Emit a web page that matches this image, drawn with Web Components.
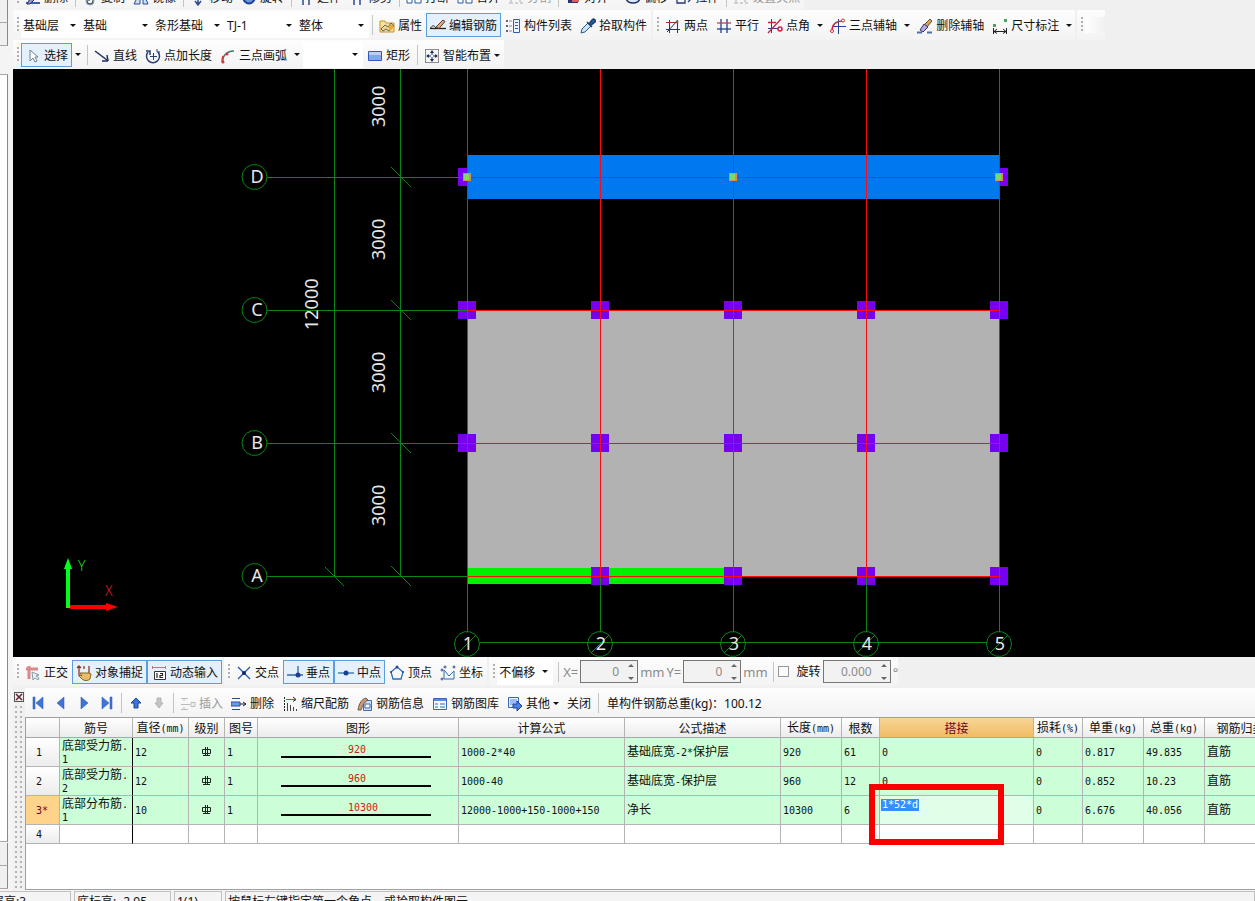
<!DOCTYPE html>
<html lang="zh-CN">
<head>
<meta charset="utf-8">
<title>钢筋编辑</title>
<style>
html,body{margin:0;height:100%;overflow:hidden}
body{font:12px/16px "Noto Sans","Noto Sans CJK SC",sans-serif;color:#111;background:#f0f0f0}
</style>
</head>
<body>
<rebar-app></rebar-app>
<script>
const define=(name,html,setup)=>{
  const t=document.createElement('template');
  t.innerHTML=html;
  customElements.define(name,class extends HTMLElement{
    constructor(){super();this.attachShadow({mode:'open'}).append(t.content.cloneNode(true));}
    connectedCallback(){if(setup&&!this.ready){this.ready=true;setup(this,this.shadowRoot);}}
  });
};

const ICONS={
 eraser:'<path d="M1 13h14" stroke="#3a5fb0" stroke-width="2"/><path d="M12 1l3 3-6 6-3-3z" fill="#e8b060" stroke="#556"/><path d="M6 7l3 3-4 4H2z" fill="#8a90d0" stroke="#335"/>',
 copy:'<path d="M5 2v9a3 3 0 0 0 6 0V5a2 2 0 0 0-4 0v6" fill="none" stroke="#456" stroke-width="1.4"/><circle cx="8" cy="11" r="4" fill="none" stroke="#89a"/>',
 mirror:'<path d="M7 2v12H1zM10 2v12h5z" fill="#cfe0f8" stroke="#2a4a90"/>',
 move:'<path d="M8 1v13M2 8h12M5 11l3 4 3-4" fill="none" stroke="#2a4a90" stroke-width="1.5"/>',
 rotate:'<circle cx="8" cy="8" r="5.5" fill="#6a94dc" stroke="#1c3f94" stroke-width="2"/>',
 extend:'<path d="M5 1v14M11 1v14M2 5h12" stroke="#2a4a90" fill="none" stroke-width="1.5"/>',
 brk:'<path d="M1 6h5v7H1zM9 6h6v7H9z" fill="#fff" stroke="#2a5a9a"/>',
 gray:'<path d="M1 13h4M7 13h3M12 13h3M3 3v9M12 3v9" stroke="#aaa" fill="none"/>',
 align:'<path d="M3 3h10v10H3z" fill="#24357c"/><path d="M7 8h7v4H7z" fill="#d86060"/>',
 offset:'<ellipse cx="8" cy="9" rx="6.500" ry="4" fill="#dfe8f8" stroke="#1c2f64" stroke-width="1.5"/>',
 stretch:'<path d="M1 5h8v8H1zM9 9h6M12 6l3 3-3 3" fill="none" stroke="#24357c" stroke-width="1.3"/>',
 prop:'<path d="M1 3h5l1 2h8v9H1z" fill="#f8e29a" stroke="#c8922c"/><path d="M2 11l4-4 3 2 3-4 3 3-3 3-2 2-3-2-3 2z" fill="#f0d890" stroke="#5c6470"/><path d="M9 9l4-3 2 3-4 4z" fill="#e8a830"/>',
 pen:'<path d="M0 10.500h16" stroke="#222" stroke-width="1.3"/><path d="M0 11c2-4 4-4 6-1" fill="none" stroke="#222"/><path d="M6 9l7-7 2 1.500-6 7z" fill="#e8a878" stroke="#5a3a30"/>',
 list:'<path d="M1 3h2M1 8h2M1 13h2" stroke="#334" stroke-width="1.500"/><path d="M4 3h3M4 8h3M4 13h3" stroke="#889"/><path d="M8.500 1.500h6v13h-6z" fill="#eef4ff" stroke="#2c5dc0"/><path d="M10 4.500h3M10 7.500h3M10 10.500h3" stroke="#2c5dc0"/>',
 picker:'<path d="M1 15l1-4 6-6 3 3-6 6z" fill="#c8e4f8" stroke="#2a5a8a"/><path d="M7 4l5 5M9 6l3-4c2-2 4 0 3 2l-4 3z" fill="#2a62a8" stroke="#1c3f74" stroke-width="1.5"/>',
 twopt:'<path d="M4.500 2v13M1 11.500h14M12.500 4v11" stroke="#223a78"/><path d="M1 4.500h10" stroke="#b03030"/><path d="M2 14L13 2" stroke="#333"/><circle cx="12" cy="4" r="1.500" fill="#7a6a30"/>',
 parallel:'<path d="M5 1v14M11 1v14" stroke="#24408a" stroke-width="1.3"/><path d="M1 5h14" stroke="#c04050" stroke-width="1.300"/><path d="M1 11h14" stroke="#24408a" stroke-width="1.3"/>',
 angle:'<path d="M4.500 1v14M1 10.500h10" stroke="#24408a"/><path d="M1 15L14 1M1 4.500h8" stroke="#c02838" stroke-width="1.3"/><circle cx="13" cy="11" r="2" fill="none" stroke="#d02030" stroke-width="1.5"/>',
 arc3:'<path d="M8.500 1v15M2 8.500h14" stroke="#24408a"/><path d="M2 13C2 6 6 3 13 3" fill="none" stroke="#d02838" stroke-width="1.5"/><circle cx="2" cy="13" r="1.500" fill="#fff" stroke="#d02838"/><circle cx="13" cy="2.500" r="1.500" fill="#fff" stroke="#d02838"/>',
 brush:'<path d="M0 14.500h5M10 14.500h5" stroke="#4a70b8" stroke-width="2"/><path d="M13 1l2 2-5 6-3-2z" fill="#e0a050" stroke="#554"/><path d="M7 6l4 3-5 5-3-2z" fill="#b8a8e0" stroke="#336"/>',
 dim:'<path d="M1.500 10v6M14.500 10v6M2 13.500h12M5 11l-3 2.500 3 2M11 11l3 2.500-3 2" stroke="#222" fill="none"/><path d="M1 6h3v3H1zM12 1h3v3h-3z" fill="#50a060"/>',
 cursor:'<path d="M5 2v11l3-3 2 4 2-1-2-4h3z" fill="#fff" stroke="#6a7f9c"/>',
 line:'<path d="M1 3l12 9" stroke="#1c2f64" stroke-width="1.5"/><path d="M14 13H8M14 13l-1-6" stroke="#1c2f64" stroke-width="1.500"/>',
 addlen:'<path d="M3 4a6.500 6.500 0 1 0 10 0" fill="none" stroke="#2a3f74" stroke-width="1.5"/><path d="M1 3h4v4" fill="none" stroke="#2a3f74" stroke-width="1.500"/><path d="M8.500 5v7M5 8.500h7M12 1v3h3" stroke="#2a3f74" fill="none"/>',
 arc:'<path d="M3 14C2 8 7 3 14 3" fill="none" stroke="#3a7a70" stroke-width="1.5"/><path d="M2 14c0-3 0-4 1-6" fill="none" stroke="#d03838" stroke-width="1.500"/><circle cx="3" cy="14" r="1.500" fill="#d03838"/><circle cx="7" cy="6" r="1.500" fill="#d03838"/>',
 rect:'<path d="M1.500 3.500h13v9h-13z" fill="#7fa8ee" stroke="#2d5cc0"/><path d="M2 4h12v3H2z" fill="#b8d0fa"/>',
 smart:'<rect x="1.500" y="1.500" width="13" height="13" fill="none" stroke="#222" stroke-dasharray="1 1"/><path d="M8 3v4M8 9v4M3 8h4M9 8h4" stroke="#1c2f64"/><path d="M8 2l2 3H6zM8 14l2-3H6zM2 8l3-2v4zM14 8l-3-2v4z" fill="#1c2f64"/>',
 ortho:'<path d="M1 4h12M4 1v13" stroke="#d88888" stroke-width="3"/><path d="M7 7l1 8 2-2 3 2 1-2-3-2 3-1z" fill="#eef2f8" stroke="#8898aa"/>',
 snap:'<path d="M3 1v10M1 3l2-2 2 2M13 1v8M8 4V1" stroke="#8a3a28" fill="none" stroke-width="1.3"/><path d="M4 8h9l2 1-1 5c-2 2-6 2-8 0l-3-3 1-1 2 1z" fill="#e8bc68" stroke="#8a6424"/>',
 dyn:'<path d="M1 2.500h14M1.500 1v3M14.500 1v3" stroke="#c07878"/><path d="M3.500 6.500h11v8h-11z" fill="#fff" stroke="#333"/><path d="M6 8v5M9 8.500h2.500v2H9v2h3" stroke="#222" fill="none" stroke-width="1.200"/>',
 cross:'<path d="M2 2l12 12M14 2L2 14" stroke="#2a5cae" stroke-width="1.400"/><circle cx="8" cy="8" r="2" fill="#102a60"/>',
 perp:'<path d="M0 10h16M11 1v9" stroke="#2a6cae" stroke-width="1.3"/><circle cx="11" cy="10" r="2.500" fill="#1c3f94"/>',
 mid:'<path d="M0 8h16" stroke="#3a86b8" stroke-width="1.5"/><circle cx="8" cy="8" r="2.500" fill="#1c3f94"/>',
 penta:'<path d="M8 2l6 5-2 7H4L2 7z" fill="none" stroke="#2a6cbe" stroke-width="1.300"/><circle cx="8" cy="2" r="1.500" fill="#2a4a90"/><circle cx="14" cy="7" r="1" fill="#2a4a90"/><circle cx="2" cy="7" r="1" fill="#2a4a90"/>',
 coord:'<path d="M4 5v9h10V6l-5 5z" fill="none" stroke="#2a6cae"/><g fill="#fff" stroke="#2a4a90"><circle cx="2" cy="5" r="1"/><circle cx="2" cy="14" r="1"/><circle cx="5" cy="2" r="1"/><circle cx="14" cy="2" r="1"/></g>',
 first:'<path d="M3 2h2v12H3zM13 2v12L6 8z" fill="#3f74d8" stroke="#2450b0" stroke-width=".500"/>',
 prev:'<path d="M11 2v12L4 8z" fill="#3f74d8" stroke="#2450b0" stroke-width=".500"/>',
 next:'<path d="M5 2v12l7-6z" fill="#3f74d8" stroke="#2450b0" stroke-width=".500"/>',
 last:'<path d="M11 2h2v12h-2zM3 2v12l7-6z" fill="#3f74d8" stroke="#2450b0" stroke-width=".500"/>',
 up:'<path d="M8 3l5 5h-3v5H6V8H3z" fill="#3f74d8" stroke="#1c409a"/>',
 down:'<path d="M8 13l4-5H10V3H6v5H4z" fill="#c4c4c4" stroke="#b4b4b4"/>',
 insert:'<path d="M1 2.500h7M1 13.500h7M1 8.500h9M4 2v3M4 11v2" stroke="#bbb"/><path d="M11 6.500h4v4h-4z" fill="#eee" stroke="#bbb"/>',
 remove:'<path d="M1 2.500h8M1 13.500h8" stroke="#2a4a90"/><path d="M0 6h9v4H0z" fill="#6a9ae8" stroke="#24509a"/><path d="M9 8h6M12 6l3 2-3 2" fill="none" stroke="#222"/>',
 scale:'<path d="M2.500 1v14" stroke="#222" stroke-dasharray="2 1"/><path d="M4 3.500h9" stroke="#c04040"/><path d="M11 1l3 2.500-3 2" stroke="#222"/><path d="M5.500 7v8M8.500 9v6M11.500 11v4M14.500 13v2" stroke="#444"/>',
 info:'<path d="M6.500 4.500h8v10h-8z" fill="#cfe0fa" stroke="#3a6ab8"/><path d="M8 8h5v4H8z" fill="#fff" stroke="#3a6ab8"/><path d="M1 14c1-7 4-11 8-12l2 2c-4 2-5 5-7 10z" fill="#c89a7a" stroke="#6a5848"/>',
 lib:'<path d="M1.500 2.500h13v11h-13z" fill="#f4f8ff" stroke="#3a66b4"/><path d="M2 4h12" stroke="#5a8ade" stroke-width="2"/><path d="M3 8h3M8 8h5M3 11h3M8 11h5" stroke="#3a66b4"/>',
 other:'<path d="M1.500 1.500h10v10h-10z" fill="#e4eeff" stroke="#3a66b4"/><path d="M3 4h7M3 6h7M3 8h4" stroke="#5a8ade"/><path d="M6 8h4V5l5 5-5 5v-3H6z" fill="#4a80e0" stroke="#1c409a"/>'
};

define('ui-icon','<style>:host{display:block;width:16px;height:16px;flex:none}svg{display:block}</style><svg width="16" height="16" viewBox="0 0 16 16" fill="none" aria-hidden="true"></svg>',
 (el,r)=>{r.querySelector('svg').innerHTML=ICONS[el.getAttribute('name')]||'';});

define('tool-button',`<style>
:host{display:flex;flex:none;align-items:center}
button{font:inherit;color:inherit;display:flex;align-items:center;gap:3px;height:24px;margin:0;padding:2px 3px 0;border:1px solid transparent;background:none;white-space:nowrap}
:host([active]) button{border-color:#5a9de0;background:#e4f0fb}
:host([disabled]) button{color:#9a9a9a}
:host([bare]) button{padding:0;width:23px;justify-content:center}
:host button.split{width:12px;padding:0;justify-content:center;border:0;background:none}
svg{display:block}
</style><button type="button" class="main"></button>`,
 (el,r)=>{
  const b=r.querySelector('.main'),arrow='<svg width="6" height="3" viewBox="0 0 6 3" aria-hidden="true"><path d="M0 0h6L3 3z" fill="#111"/></svg>';
  const ic=el.getAttribute('icon');
  b.innerHTML=(ic?`<ui-icon name="${ic}"></ui-icon>`:'')+(el.hasAttribute('bare')?'':'<slot></slot>')+(el.hasAttribute('menu')?arrow:'');
  if(el.hasAttribute('label'))b.setAttribute('aria-label',el.getAttribute('label'));
  if(el.hasAttribute('active'))b.setAttribute('aria-pressed','true');
  if(el.hasAttribute('disabled'))b.disabled=true;
  if(el.hasAttribute('split')){
   const s=document.createElement('button');s.type='button';s.className='split';s.setAttribute('aria-label','更多');s.innerHTML=arrow;r.append(s);
  }
 });

define('tool-select',`<style>
:host{display:grid;flex:none;width:72px;align-items:center}
:host([size="s"]){width:60px}
select,svg{grid-area:1/1}
select{appearance:none;box-sizing:border-box;font:inherit;color:inherit;width:100%;height:26px;border:0;border-radius:0;margin:0;padding:2px 0 0 2px;background:#fff}
svg{justify-self:end;margin-right:5px;pointer-events:none}
</style><select></select><svg width="6" height="3" viewBox="0 0 6 3" aria-hidden="true"><path d="M0 0h6L3 3z" fill="#111"/></svg>`,
 (el,r)=>{const s=r.querySelector('select');s.setAttribute('aria-label',el.getAttribute('label'));s.append(new Option(el.getAttribute('value')||''));});

define('tool-sep','<style>:host{display:block;flex:none;width:6px;height:20px;background:linear-gradient(#c4c4c4,#c4c4c4) 3px 0/1px 100% no-repeat}</style>');

define('tool-group',`<style>
:host{display:flex;flex:none;align-items:center;height:100%;background:linear-gradient(#fdfdfd,#f3f3f3)}
.grip{flex:none;width:8px;height:16px;background:radial-gradient(circle at 1px 1px,#b0b0b0 1px,transparent 1px) 4px 0/4px 4px repeat-y}
</style><span class="grip"></span><slot></slot>`);

define('tool-row',`<style>:host{display:flex;flex:none;align-items:center;gap:2px;height:30px;background:#f0f0f0;overflow:hidden}</style><slot></slot>`);

define('spin-field',`<style>
:host{display:grid;flex:none;width:58px;align-items:center}
:host([wide]){width:68px}
input,svg{grid-area:1/1}
input{box-sizing:border-box;width:100%;height:23px;font:inherit;font-size:12px;color:#8a8a8a;text-align:right;margin:0;padding:0 18px 0 2px;border:1px solid #767676;border-radius:0;background:#f2f2f2}
svg{justify-self:end;margin-right:4px}
</style><input type="text"><svg width="6" height="18" viewBox="0 0 6 18" aria-hidden="true"><path d="M0 4h6L3 1zM0 14h6l-3 3z" fill="#666"/></svg>`,
 (el,r)=>{const i=r.querySelector('input');i.value=el.getAttribute('value');i.setAttribute('aria-label',el.getAttribute('label'));});

define('offset-fields',`<style>
:host{display:flex;align-items:center;gap:2px;color:#8a8a8a;font-size:13px}
tool-select{width:56px;color:#111;font-size:12px}
label{display:flex;align-items:center;gap:8px;color:#111;font-size:12px}
input{appearance:none;width:11px;height:11px;box-sizing:border-box;margin:0;border:1px solid #999;background:#fafafa}
</style>
<tool-select label="偏移方式" value="不偏移"></tool-select><tool-sep></tool-sep>
<span>X=</span><spin-field label="X" value="0"></spin-field><span>mm</span>
<span>Y=</span><spin-field label="Y" value="0"></spin-field><span>mm</span>
<tool-sep></tool-sep><label><input type="checkbox">旋转</label>
<spin-field wide label="旋转角度" value="0.000"></spin-field><span>°</span>`);

define('side-strip',`<style>
:host{display:flex;flex-direction:column;width:13px;background:#f4f4f4}
div{width:7px;border-right:1px solid #8a8a8a;border-bottom:1px solid #a8a8a8;background:#f0f0f0}
.tab{height:22px}.fill{flex:1;background:#fff;margin-top:28px;border-top:1px solid #a8a8a8}.end{margin-bottom:1px}
.gap{height:1px;border:0;background:none}
</style><div class="tab"></div><div class="tab"></div><div class="fill"></div><div class="gap"></div><div class="tab"></div><div class="tab end"></div>`);

define('cad-view',`<style>
:host{display:block;min-height:0;background:#000;overflow:hidden}
svg{display:block;width:100%;height:100%}
text{font:18px "Noto Sans","Noto Sans CJK SC",sans-serif;fill:#e6e6e6}
.n{text-anchor:middle}
.ax{font:300 14px "Open Sans","Noto Sans",sans-serif}
</style><svg role="img" aria-label="基础层平面图"><g id="g" transform="translate(-13 -69)" fill="none"></g></svg>`,
 (el,r)=>{
  const X=[467,600,733,866,999],Y=[177,310,443,576],names=['D','C','B','A'];
  const G='stroke="#0c8418"',R='stroke="#ff0a10"';
  const circle=(x,y)=>{let p=[];for(let i=0;i<14;i++){const a=i*Math.PI/7;p.push((x+12.5*Math.cos(a)).toFixed(1)+','+(y+12.5*Math.sin(a)).toFixed(1));}return `<polygon points="${p.join(' ')}" ${G}/>`;};
  let s='<path d="M468 311h531v265H468z" fill="#b2b2b2"/><path d="M458 168h18v18h-18zM990 168h18v18h-18z" fill="#7800f0"/><path d="M467 155h532v44H467z" fill="#0078f0"/><path d="M467 568h258v16H467z" fill="#00f000"/>';
  for(const y of Y.slice(1))for(const x of X)if(!(y===576&&x===467))s+=`<path d="M${x-9} ${y-9}h18v18h-18z" fill="#7800f0"/>`;
  s+=`<path d="M334.5 69V577M400.5 69V577M480 642.500H987" ${G}/>`;
  Y.forEach((y,i)=>{
   s+=`<path d="M267 ${y}.5H467" ${G}/><path d="M391 ${y-10}l20 20" ${G}/>${circle(254.5,y)}<text class="n" x="257" y="${y+6}">${names[i]}</text>`;
   s+=`<path d="M467 ${y}.5H999.500" ${R}/>`;
  });
  s+=`<path d="M325 567l19 19" ${G}/>`;
  X.forEach((x,i)=>{
   s+=`<path d="M${x}.5 69V577" ${R}/><path d="M${x}.5 577V632" ${G}/>${circle(x,644)}<path d="M${x-9} 653l18-18" ${G}/><text class="n" x="${x+1}" y="650">${i+1}</text>`;
  });
  for(const y of [127,260,393,526])s+=`<text transform="translate(385 ${y}) rotate(-90)">3000</text>`;
  s+='<text transform="translate(318 330) rotate(-90)">12000</text>';
  for(const x of [467,733,999])s+=`<path d="M${x-4} 173h8v8h-8z" fill="#d09050"/><path d="M${x-3} 174h5v6h-5z" fill="#80d860"/>`;
  s+='<path d="M68 608V568" stroke="#00ff1c" stroke-width="4"/><path d="M64 569h8L68 558z" fill="#00ff1c"/><path d="M70 607H108" stroke="#f00" stroke-width="4"/><path d="M106 603v8l12-4z" fill="#f00"/><text class="ax" x="78" y="571" style="fill:#28e028">Y</text><text class="ax" x="105" y="596" style="fill:#f02020">X</text>';
  r.getElementById('g').innerHTML=s;
 });

define('rebar-table',`<style>
:host{display:block;background:#fff;border:solid #a0a0a0;border-width:1px 0 1px 1px;overflow:hidden}
table{table-layout:fixed;border-collapse:separate;border-spacing:0;width:1251px;line-height:12px}
th,td{box-sizing:border-box;padding:0 2px;border-right:1px solid #b4b4b4;border-bottom:1px solid #b4b4b4;font-weight:400;text-align:left;vertical-align:middle;white-space:nowrap}
thead th{height:20px;padding:2px 0 0;text-align:center;background:linear-gradient(#fff,#ececec);border-bottom-color:#a8a8a8}
thead th.on{background:linear-gradient(#f9d596,#f0bc64);color:#700020}
tbody th{padding-left:10px;background:linear-gradient(#fff,#ececec)}
tbody th.on{background:#ffd48a;color:#700020}
tbody td{height:29px;background:#ccffd8}
tbody tr:last-child>*{height:19px}
tbody tr:last-child td{background:#fff}
tbody td:nth-child(2){padding-top:2px;border-right-color:#000}
.m{font:10px/12px "DejaVu Sans Mono",monospace}
td.c{text-align:center}
.c svg{display:block;margin:auto}
td.draw{padding:0 0 4px 23px}
.bar{width:83px;padding-left:67px;border-bottom:2px solid #000;color:#d01818}
td.edit{position:relative;vertical-align:top;padding-left:1px;background:#e0ffe8}
input{display:block;box-sizing:border-box;width:38px;height:12px;margin:3px 0 0;padding:0 1px;border:0;border-radius:0;background:#3390ff;color:#fff}
.mark{position:absolute;box-sizing:border-box;left:-11px;top:-12px;width:135px;height:61px;border:6px solid #f80000;pointer-events:none}
</style><table><colgroup></colgroup><thead><tr></tr></thead><tbody></tbody></table>`,
 (el,r)=>{
  const mono=t=>t.replace(/[\x21-\x7e]+/g,'<span class="m">$&</span>');
  const W=[34,73,56,36,33,201,166,156,61,38,154,49,61,61,72];
  const H=['','筋号','直径(mm)','级别','图号','图形','计算公式','公式描述','长度(mm)','根数','搭接','损耗(%)','单重(kg)','总重(kg)','钢筋归类'];
  const D=[
   ['1','底部受力筋.|1','12','@','1','#920','1000-2*40','基础底宽-2*保护层','920','61','0','0','0.817','49.835','直筋'],
   ['2','底部受力筋.|2','12','@','1','#960','1000-40','基础底宽-保护层','960','12','0','0','0.852','10.23','直筋'],
   ['3*','底部分布筋.|1','10','@','1','#10300','12000-1000+150-1000+150','净长','10300','6','!1*52*d','0','6.676','40.056','直筋'],
   ['4','','','','','','','','','','','','','','']];
  const grade='<svg width="11" height="10" viewBox="0 0 11 10" role="img" aria-label="三级钢"><path d="M1.500 2.500h8v4h-8zM4.500 0v9M6.500 0v9M2 8.500h7" fill="none" stroke="#222"/></svg>';
  r.querySelector('colgroup').innerHTML=W.map(w=>`<col style="width:${w}px">`).join('');
  r.querySelector('thead tr').innerHTML=H.map((h,i)=>`<th scope="col"${i===10?' class="on"':''}>${mono(h)}</th>`).join('');
  r.querySelector('tbody').innerHTML=D.map(row=>'<tr>'+row.map((v,i)=>{
   if(!i)return `<th scope="row"${v==='3*'?' class="on"':''}>${mono(v)}</th>`;
   if(v==='@')return `<td class="c">${grade}</td>`;
   if(v[0]==='#')return `<td class="draw"><div class="bar">${mono(v.slice(1))}</div></td>`;
   if(v[0]==='!')return `<td class="edit"><input class="m" aria-label="搭接" value="${v.slice(1)}"><span class="mark"></span></td>`;
   return `<td>${v.split('|').map(mono).join('<br>')}</td>`;
  }).join('')+'</tr>').join('');
 });

define('edit-panel',`<style>
:host{display:grid;grid-template-columns:12px minmax(0,1fr);height:202px}
.handle{display:flex;flex-direction:column;align-items:center;gap:4px;padding:4px 0 2px}
.handle button{display:block;flex:none;box-sizing:border-box;padding:0;border:1px solid #555;width:10px;height:10px;background:#eee}
.handle svg{display:block}
.dots{flex:1;width:8px;background:radial-gradient(circle at 1px 1px,#b4b4b4 1px,transparent 1px) 0 0/5px 5px}
.body{display:flex;flex-direction:column;min-width:0}
.tools{display:flex;flex:none;align-items:center;height:29px;padding-left:1px;background:linear-gradient(#fdfdfd,#f3f3f3)}
output{padding:2px 0 0 6px;white-space:nowrap}
rebar-table{flex:1}
</style>
<div class="handle"><button type="button" aria-label="关闭面板"><svg width="8" height="8" viewBox="0 0 8 8"><path d="M1 1l6 6M7 1L1 7" stroke="#702030" stroke-width="1.500"/></svg></button><span class="dots"></span></div>
<div class="body"><div class="tools">
<tool-button bare icon="first" label="第一条"></tool-button><tool-button bare icon="prev" label="上一条"></tool-button><tool-button bare icon="next" label="下一条"></tool-button><tool-button bare icon="last" label="最后一条"></tool-button><tool-sep></tool-sep>
<tool-button bare icon="up" label="上移"></tool-button><tool-button bare disabled icon="down" label="下移"></tool-button><tool-sep></tool-sep>
<tool-button disabled icon="insert">插入</tool-button><tool-button icon="remove">删除</tool-button><tool-button icon="scale">缩尺配筋</tool-button><tool-button icon="info">钢筋信息</tool-button><tool-button icon="lib">钢筋图库</tool-button><tool-button menu icon="other">其他</tool-button><tool-button>关闭</tool-button><tool-sep></tool-sep>
<output>单构件钢筋总重(kg)：100.12</output>
</div><rebar-table></rebar-table></div>`);

define('status-line',`<style>
:host{display:flex;gap:3px;height:11px;overflow:hidden;background:#f4f4f4;grid-column:1/-1}
span{box-sizing:border-box;flex:none;height:24px;padding:2px 2px 0;border:solid #c0c0c0;border-width:1px 1px 0 1px;margin-top:1px;white-space:nowrap;overflow:hidden;line-height:16px}
.a{width:71px;padding-left:0;text-indent:-8px;border-left:0}.b{width:97px}.c{width:48px}.d{flex:1}
</style><span class="a">层高:3</span><span class="b">底标高: -2.95</span><span class="c">1(1)</span><span class="d">按鼠标左键指定第一个角点，或拾取构件图元</span>`);

define('rebar-app',`<style>
:host{display:grid;grid-template:minmax(0,1fr) auto/13px minmax(0,1fr);height:100vh;overflow:hidden}
main{display:flex;flex-direction:column;min-width:0;overflow:hidden}
.top{height:27px;margin-top:-17px}
.draw{height:29px}
.snap{height:29px;padding-bottom:2px}
.tail{width:20px;background:linear-gradient(90deg,#fff,#f0f0f0)}
cad-view{flex:1}
edit-panel{flex:none}
</style>
<side-strip></side-strip>
<main>
<tool-row class="top"><tool-group>
<tool-button icon="eraser">删除</tool-button><tool-sep></tool-sep><tool-button icon="copy">复制</tool-button><tool-button icon="mirror">镜像</tool-button><tool-sep></tool-sep><tool-button icon="move">移动</tool-button><tool-button icon="rotate">旋转</tool-button><tool-sep></tool-sep><tool-button icon="extend">延伸</tool-button><tool-button icon="extend">修剪</tool-button><tool-sep></tool-sep><tool-button icon="brk">打断</tool-button><tool-button icon="brk">合并</tool-button><tool-button disabled icon="gray">分割</tool-button><tool-sep></tool-sep><tool-button menu icon="align">对齐</tool-button><tool-button icon="offset">偏移</tool-button><tool-button icon="stretch">拉伸</tool-button><tool-sep></tool-sep><tool-button disabled icon="gray">设置夹点</tool-button>
</tool-group></tool-row>
<tool-row><tool-group>
<tool-select size="s" label="楼层" value="基础层"></tool-select><tool-select label="构件分类" value="基础"></tool-select><tool-select label="构件类型" value="条形基础"></tool-select><tool-select label="构件" value="TJ-1"></tool-select><tool-select label="单元" value="整体"></tool-select><tool-sep></tool-sep>
<tool-button icon="prop">属性</tool-button><tool-button active icon="pen">编辑钢筋</tool-button><tool-button icon="list">构件列表</tool-button><tool-button icon="picker">拾取构件</tool-button>
</tool-group><tool-group>
<tool-button icon="twopt">两点</tool-button><tool-button icon="parallel">平行</tool-button><tool-button split icon="angle">点角</tool-button><tool-button split icon="arc3">三点辅轴</tool-button><tool-button icon="brush">删除辅轴</tool-button><tool-button split icon="dim">尺寸标注</tool-button>
</tool-group><tool-group><span class="tail">&nbsp;</span></tool-group></tool-row>
<tool-row class="draw"><tool-group>
<tool-button active split icon="cursor">选择</tool-button><tool-sep></tool-sep><tool-button icon="line">直线</tool-button><tool-button icon="addlen">点加长度</tool-button><tool-button split icon="arc">三点画弧</tool-button><tool-select size="s" label="画弧方式"></tool-select><tool-button icon="rect">矩形</tool-button><tool-sep></tool-sep><tool-button menu icon="smart">智能布置</tool-button>
</tool-group></tool-row>
<cad-view></cad-view>
<tool-row class="snap"><tool-group>
<tool-button icon="ortho">正交</tool-button><tool-button active icon="snap">对象捕捉</tool-button><tool-button active icon="dyn">动态输入</tool-button>
</tool-group><tool-group>
<tool-button icon="cross">交点</tool-button><tool-button active icon="perp">垂点</tool-button><tool-button active icon="mid">中点</tool-button><tool-button icon="penta">顶点</tool-button><tool-button icon="coord">坐标</tool-button>
</tool-group><tool-group><offset-fields></offset-fields></tool-group></tool-row>
<edit-panel></edit-panel>
</main>
<status-line></status-line>`);
</script>
</body>
</html>
